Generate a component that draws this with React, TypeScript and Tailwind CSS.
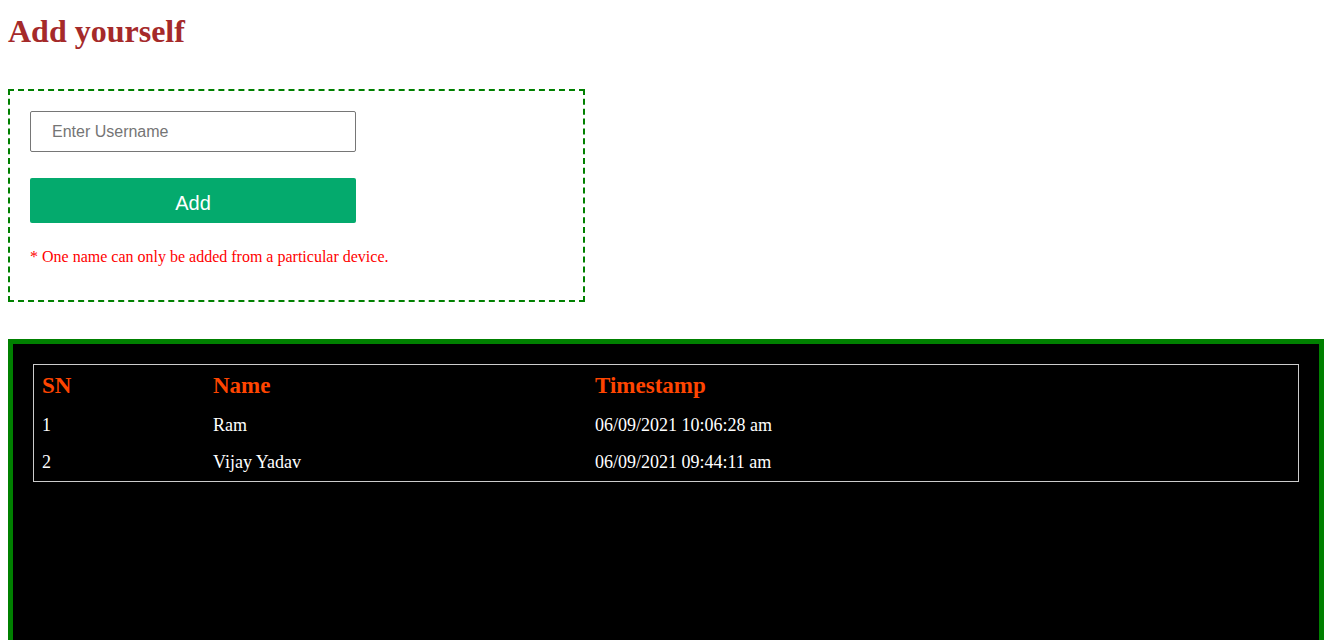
import { useState } from "react";

interface Entry {
  sn: number;
  name: string;
  timestamp: string;
}

const entries: Entry[] = [
  { sn: 1, name: "Ram", timestamp: "06/09/2021 10:06:28 am" },
  { sn: 2, name: "Vijay Yadav", timestamp: "06/09/2021 09:44:11 am" },
];

export default function App() {
  const [username, setUsername] = useState("");

  return (
    <div className="min-h-screen bg-white pl-2 font-['Liberation_Serif',serif]">
      <h1 className="pt-[13px] text-[32px] leading-[36px] font-bold text-[#a52a2a]">
        Add yourself
      </h1>

      <div className="mt-[40px] w-[577px] h-[213px] border-2 border-dashed border-[#008000] p-5">
        <input
          type="text"
          value={username}
          onChange={(e) => setUsername(e.target.value)}
          placeholder="Enter Username"
          className="block w-[326px] h-[41px] border border-[#767676] rounded-[2px] pl-[21px] text-base font-['Liberation_Sans',sans-serif] text-black placeholder:text-[#757575] outline-none"
        />
        <button
          type="button"
          className="mt-[26px] flex w-[326px] h-[45px] items-center justify-center rounded-[2px] bg-[#04aa6d] pt-1 text-[20px] text-white font-['Liberation_Sans',sans-serif]"
        >
          Add
        </button>
        <p className="mt-[22px] text-base text-[#ff0000]">
          * One name can only be added from a particular device.
        </p>
      </div>

      <div className="mt-[37px] w-[1316px] h-[320px] border-[5px] border-[#008000] bg-black p-5">
        <div className="w-[1266px] border border-[#cccccc]">
          <div className="grid grid-cols-[171px_382px_1fr] h-[42px] items-center text-[23px] font-bold text-[#ff4500]">
            <div className="pl-2">SN</div>
            <div className="pl-2">Name</div>
            <div className="pl-2">Timestamp</div>
          </div>
          {entries.map((row) => (
            <div
              key={row.sn}
              className="grid grid-cols-[171px_382px_1fr] h-[37px] items-center text-[18px] text-white"
            >
              <div className="pl-2">{row.sn}</div>
              <div className="pl-2">{row.name}</div>
              <div className="pl-2">{row.timestamp}</div>
            </div>
          ))}
        </div>
      </div>
    </div>
  );
}
